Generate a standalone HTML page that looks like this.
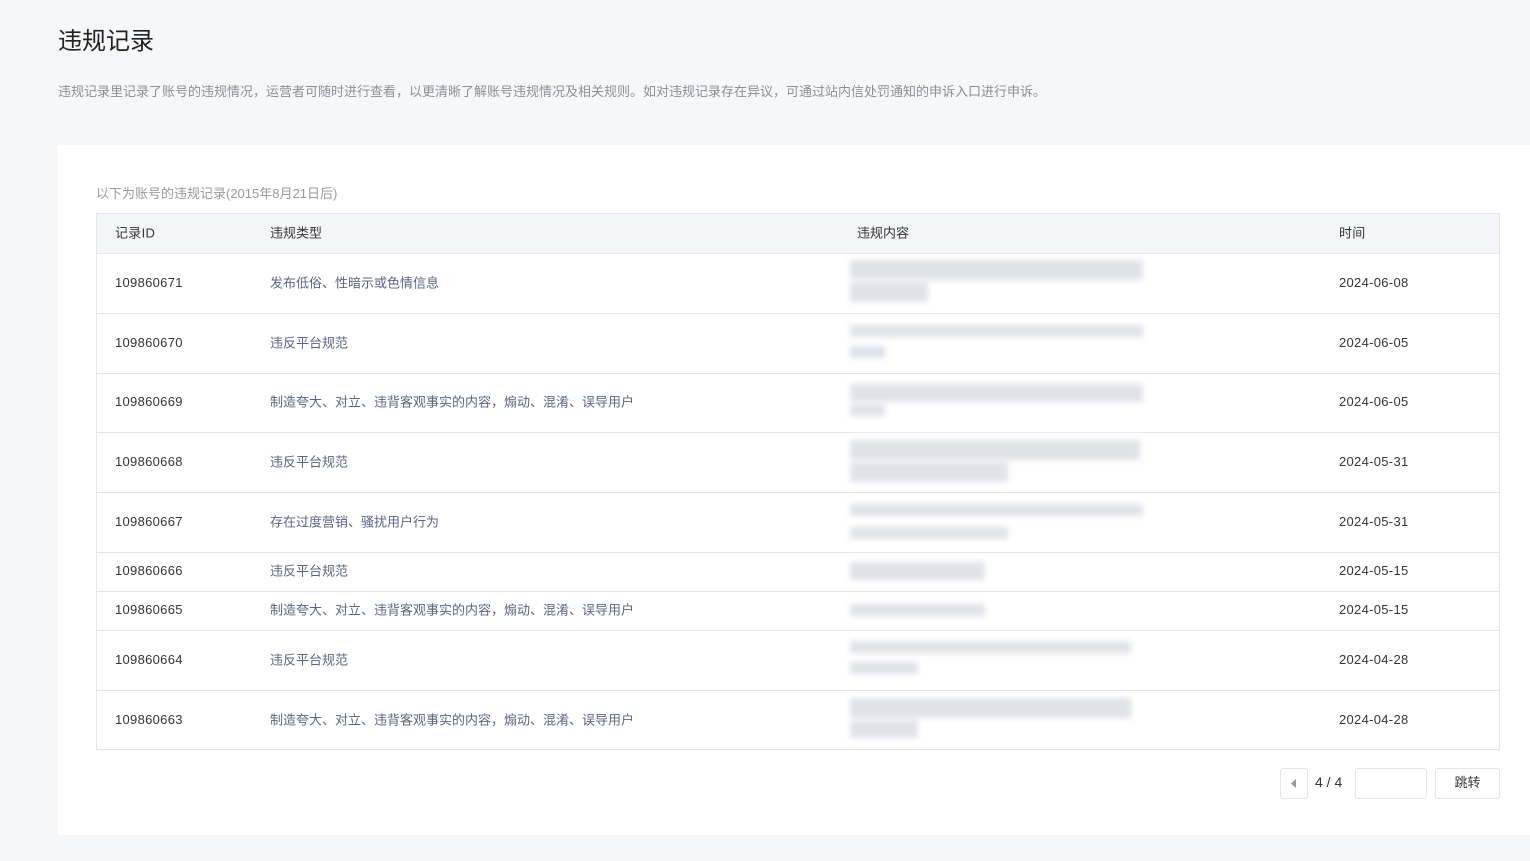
<!DOCTYPE html>
<html><head><meta charset="utf-8"><style>
*{margin:0;padding:0;box-sizing:border-box}
body{width:1530px;height:861px;background:#f6f7f9;font-family:"Liberation Sans","Noto Sans CJK SC",sans-serif;position:relative;overflow:hidden}
h1{position:absolute;left:58px;top:21px;font-size:24px;font-weight:normal;color:#222}
.desc{position:absolute;left:58px;top:81px;font-size:13px;color:#8a8f99}
.card{position:absolute;left:58px;top:145px;width:1472px;height:690px;background:#fff}
.sub{position:absolute;left:96px;top:183px;font-size:13px;color:#9a9a9a}
.tbl{position:absolute;left:96px;top:213px;width:1404px;height:537px;border:1px solid #e4e6eb}
.row{position:absolute;left:0;width:1402px;border-top:1px solid #e4e6eb;font-size:13px}
.row span{position:absolute;top:50%;transform:translateY(-60%);white-space:nowrap}
.c1{left:18px;color:#353535;letter-spacing:0.3px}.c2{left:173px;color:#5b6582}.c4{left:1242px;color:#353535;letter-spacing:0.3px}
.hd{background:#f4f5f8;border-top:none}.hd span{color:#353535}
.bl{position:absolute;background:#d8dbe4;filter:blur(3px);opacity:.8}
.pg{position:absolute;top:768px;height:31px;border:1px solid #e4e6eb;border-radius:3px;background:#fff}
</style></head><body>
<h1>违规记录</h1>
<div class="desc">违规记录里记录了账号的违规情况，运营者可随时进行查看，以更清晰了解账号违规情况及相关规则。如对违规记录存在异议，可通过站内信处罚通知的申诉入口进行申诉。</div>
<div class="card"></div>
<div class="sub">以下为账号的违规记录(2015年8月21日后)</div>
<div class="tbl">
<div class="row hd" style="top:0;height:39px"><span class="c1">记录ID</span><span class="c2">违规类型</span><span style="left:760px">违规内容</span><span class="c4">时间</span></div>
<div class="row" style="top:39px;height:60px"><span class="c1">109860671</span><span class="c2">发布低俗、性暗示或色情信息</span><span class="c4">2024-06-08</span></div>
<div class="row" style="top:99px;height:60px"><span class="c1">109860670</span><span class="c2">违反平台规范</span><span class="c4">2024-06-05</span></div>
<div class="row" style="top:159px;height:59px"><span class="c1">109860669</span><span class="c2">制造夸大、对立、违背客观事实的内容，煽动、混淆、误导用户</span><span class="c4">2024-06-05</span></div>
<div class="row" style="top:218px;height:60px"><span class="c1">109860668</span><span class="c2">违反平台规范</span><span class="c4">2024-05-31</span></div>
<div class="row" style="top:278px;height:60px"><span class="c1">109860667</span><span class="c2">存在过度营销、骚扰用户行为</span><span class="c4">2024-05-31</span></div>
<div class="row" style="top:338px;height:39px"><span class="c1">109860666</span><span class="c2">违反平台规范</span><span class="c4">2024-05-15</span></div>
<div class="row" style="top:377px;height:39px"><span class="c1">109860665</span><span class="c2">制造夸大、对立、违背客观事实的内容，煽动、混淆、误导用户</span><span class="c4">2024-05-15</span></div>
<div class="row" style="top:416px;height:60px"><span class="c1">109860664</span><span class="c2">违反平台规范</span><span class="c4">2024-04-28</span></div>
<div class="row" style="top:476px;height:60px"><span class="c1">109860663</span><span class="c2">制造夸大、对立、违背客观事实的内容，煽动、混淆、误导用户</span><span class="c4">2024-04-28</span></div>
</div>
<div class="bl" style="left:850px;top:260px;width:293px;height:20px"></div><div class="bl" style="left:850px;top:282px;width:78px;height:20px"></div>
<div class="bl" style="left:850px;top:325px;width:293px;height:12px"></div><div class="bl" style="left:850px;top:346px;width:35px;height:12px"></div>
<div class="bl" style="left:850px;top:384px;width:293px;height:18px"></div><div class="bl" style="left:850px;top:404px;width:35px;height:12px"></div>
<div class="bl" style="left:850px;top:440px;width:290px;height:20px"></div><div class="bl" style="left:850px;top:462px;width:158px;height:20px"></div>
<div class="bl" style="left:850px;top:504px;width:293px;height:12px"></div><div class="bl" style="left:850px;top:527px;width:158px;height:12px"></div>
<div class="bl" style="left:850px;top:562px;width:135px;height:18px"></div>
<div class="bl" style="left:850px;top:604px;width:135px;height:12px"></div>
<div class="bl" style="left:850px;top:641px;width:281px;height:12px"></div><div class="bl" style="left:850px;top:662px;width:68px;height:12px"></div>
<div class="bl" style="left:850px;top:698px;width:281px;height:20px"></div><div class="bl" style="left:850px;top:720px;width:68px;height:18px"></div>
<div class="pg" style="left:1280px;width:28px"><svg width="26" height="29" style="position:absolute;left:0;top:0"><path d="M10 14.5 L15 10 L15 19 Z" fill="#999"/></svg></div>
<div style="position:absolute;left:1315px;top:774px;font-size:14px;color:#353535">4 / 4</div>
<div class="pg" style="left:1355px;width:72px"></div>
<div class="pg" style="left:1435px;width:65px;font-size:13px;color:#353535;text-align:center;line-height:27px">跳转</div>
</body></html>
